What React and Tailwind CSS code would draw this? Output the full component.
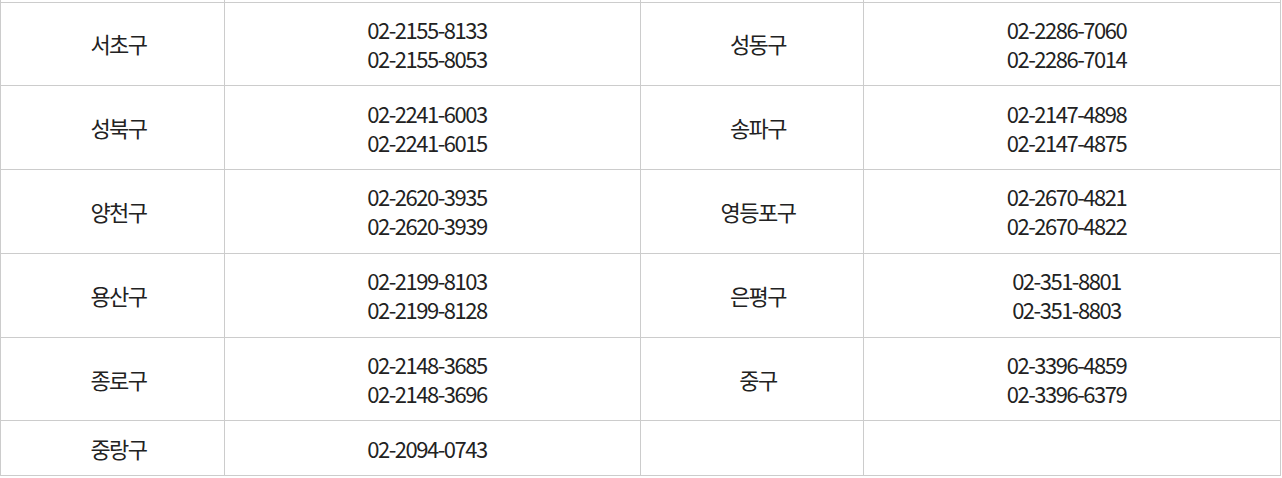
const rows = [
    { a: "서초구", ap: ["02-2155-8133", "02-2155-8053"], b: "성동구", bp: ["02-2286-7060", "02-2286-7014"] },
    { a: "성북구", ap: ["02-2241-6003", "02-2241-6015"], b: "송파구", bp: ["02-2147-4898", "02-2147-4875"] },
    { a: "양천구", ap: ["02-2620-3935", "02-2620-3939"], b: "영등포구", bp: ["02-2670-4821", "02-2670-4822"] },
    { a: "용산구", ap: ["02-2199-8103", "02-2199-8128"], b: "은평구", bp: ["02-351-8801", "02-351-8803"] },
    { a: "종로구", ap: ["02-2148-3685", "02-2148-3696"], b: "중구", bp: ["02-3396-4859", "02-3396-6379"] },
    { a: "중랑구", ap: ["02-2094-0743"], b: "", bp: [] },
];

const nameCell = "border border-[#cccccc] text-center align-middle py-[12.4px] pl-[20px] pr-[8px]";
const telCell = "border border-[#cccccc] text-center align-middle py-[12.4px] pl-[4px] pr-[15px]";

export default function App() {
    return (
        <div
            className="bg-white w-[1282px] h-[478px] text-[#222222] text-[22px] leading-[29px] tracking-[-1.5px]"
            style={{ fontFamily: '"Noto Sans CJK KR", "Noto Sans", sans-serif' }}
        >
            <table className="w-[1280px] border-collapse table-fixed">
                <colgroup>
                    <col className="w-[224px]" />
                    <col className="w-[416px]" />
                    <col className="w-[223px]" />
                    <col className="w-[417px]" />
                </colgroup>
                <tbody>
                    {/* previous row, cut off at the top */}
                    <tr className="h-[2px]">
                        <td className="border-x border-[#cccccc] p-0 h-[2px] leading-none"></td>
                        <td className="border-x border-[#cccccc] p-0 h-[2px] leading-none"></td>
                        <td className="border-x border-[#cccccc] p-0 h-[2px] leading-none"></td>
                        <td className="border-x border-[#cccccc] p-0 h-[2px] leading-none"></td>
                    </tr>
                    {rows.map((r) => (
                        <tr key={r.a}>
                            <td className={nameCell}>{r.a}</td>
                            <td className={telCell}>
                                {r.ap.map((p) => (
                                    <div key={p}>{p}</div>
                                ))}
                            </td>
                            <td className={nameCell}>{r.b}</td>
                            <td className={telCell}>
                                {r.bp.map((p) => (
                                    <div key={p}>{p}</div>
                                ))}
                            </td>
                        </tr>
                    ))}
                </tbody>
            </table>
        </div>
    );
}
